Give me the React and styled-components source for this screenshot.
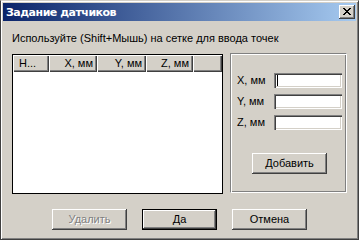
import React from "react";
import styled, { createGlobalStyle } from "styled-components";

const GlobalStyle = createGlobalStyle`
  html, body { margin: 0; padding: 0; background: #D4D0C8; }
  * { box-sizing: border-box; }
`;

const Window = styled.div`
  width: 359px;
  height: 240px;
  background: #D4D0C8;
  border-style: solid;
  border-width: 1px;
  border-color: #D4D0C8 #404040 #404040 #404040;
  box-shadow: inset 1px 1px 0 #fff, inset -1px -1px 0 #808080;
  padding: 2px;
  display: flex;
  flex-direction: column;
  font-family: "Liberation Sans", Arial, sans-serif;
  font-size: 11px;
  color: #000;
`;

const TitleBar = styled.div`
  height: 18px;
  display: flex;
  align-items: center;
  justify-content: space-between;
  padding: 0 0 0 3px;
  background: linear-gradient(to right, #0A246A, #A6CAF0);
`;

const TitleText = styled.span`
  color: #fff;
  font-family: "DejaVu Sans", Verdana, sans-serif;
  font-weight: bold;
  font-size: 11px;
  line-height: 13px;
  letter-spacing: -0.5px;
`;

const CloseButton = styled.div`
  width: 16px;
  height: 14px;
  background: #D4D0C8;
  box-shadow: inset -1px -1px 0 #404040, inset 1px 1px 0 #fff,
    inset -2px -2px 0 #808080, inset 2px 2px 0 #D4D0C8;
  display: flex;
  align-items: center;
  justify-content: center;
  padding-bottom: 1px;
  margin-right: 1px;
`;

const Body = styled.div`
  padding: 0 9px;
  display: flex;
  flex-direction: column;
`;

const Hint = styled.div`
  margin-top: 11px;
  line-height: 13px;
  white-space: nowrap;
`;

const MainRow = styled.div`
  margin-top: 8px;
  display: flex;
  align-items: flex-start;
  gap: 7px;
`;

const ListView = styled.div`
  margin-top: 1px;
  width: 211px;
  height: 140px;
  border: 1px solid #000;
  background: #fff;
  display: flex;
  flex-direction: column;
`;

const Header = styled.div`
  display: flex;
  height: 17px;
  background: #D4D0C8;
`;

const HeaderCell = styled.div`
  width: ${(p) => (p.$w ? `${p.$w}px` : "auto")};
  flex: ${(p) => (p.$w ? "0 0 auto" : "1 1 auto")};
  height: 17px;
  line-height: 16px;
  padding: 0 ${(p) => (p.$right ? "4px" : "6px")};
  text-align: ${(p) => (p.$right ? "right" : "left")};
  white-space: nowrap;
  overflow: hidden;
  box-shadow: inset 1px 1px 0 #fff, inset -1px -1px 0 #404040,
    inset -2px -2px 0 #808080;
`;

const GroupBox = styled.div`
  width: 117px;
  height: 140px;
  border-style: solid;
  border-width: 1px;
  border-color: #808080 #fff #fff #808080;
  box-shadow: inset 1px 1px 0 #fff, inset -1px -1px 0 #808080;
  padding: 19px 4px 0 6px;
  display: flex;
  flex-direction: column;
`;

const Fields = styled.div`
  display: grid;
  grid-template-columns: 37px 68px;
  row-gap: 6px;
  align-items: center;
`;

const FieldLabel = styled.span`
  line-height: 15px;
  white-space: nowrap;
`;

const TextBox = styled.div`
  height: 15px;
  background: #fff;
  box-shadow: inset 1px 1px 0 #808080, inset 2px 2px 0 #404040,
    inset -1px -1px 0 #fff, inset -2px -2px 0 #D4D0C8;
  display: flex;
  align-items: center;
  padding-left: 3px;
`;

const Caret = styled.span`
  width: 1px;
  height: 11px;
  background: #000;
`;

const Button = styled.div`
  width: 75px;
  height: 21px;
  display: flex;
  align-items: center;
  justify-content: center;
  background: #D4D0C8;
  color: ${(p) => (p.$disabled ? "#808080" : "#000")};
  text-shadow: ${(p) => (p.$disabled ? "1px 1px 0 #fff" : "none")};
  border: ${(p) => (p.$default ? "1px solid #000" : "none")};
  box-shadow: inset -1px -1px 0 #404040, inset 1px 1px 0 #fff,
    inset -2px -2px 0 #808080, inset 2px 2px 0 #D4D0C8;
  line-height: 13px;
  white-space: nowrap;
`;

const AddButton = styled(Button)`
  margin-top: 23px;
  align-self: center;
`;

const ButtonRow = styled.div`
  margin-top: 15px;
  display: flex;
  justify-content: center;
  gap: 15px;
`;

export default function App() {
  return (
    <>
      <GlobalStyle />
      <Window>
        <TitleBar>
          <TitleText>Задание датчиков</TitleText>
          <CloseButton>
            <svg width="8" height="7" viewBox="0 0 8 7">
              <path
                d="M0 0h2v1h1v1h2v-1h1v-1h2v1h-1v1h-1v1h-1v1h1v1h1v1h1v1h-2v-1h-1v-1h-2v1h-1v1h-2v-1h1v-1h1v-1h1v-1h-1v-1h-1v-1h-1z"
                fill="#000"
              />
            </svg>
          </CloseButton>
        </TitleBar>
        <Body>
          <Hint>Используйте (Shift+Мышь) на сетке для ввода точек</Hint>
          <MainRow>
            <ListView>
              <Header>
                <HeaderCell $w={36}>Н...</HeaderCell>
                <HeaderCell $w={48} $right>X, мм</HeaderCell>
                <HeaderCell $w={49} $right>Y, мм</HeaderCell>
                <HeaderCell $w={47} $right>Z, мм</HeaderCell>
                <HeaderCell />
              </Header>
            </ListView>
            <GroupBox>
              <Fields>
                <FieldLabel>X, мм</FieldLabel>
                <TextBox>
                  <Caret />
                </TextBox>
                <FieldLabel>Y, мм</FieldLabel>
                <TextBox />
                <FieldLabel>Z, мм</FieldLabel>
                <TextBox />
              </Fields>
              <AddButton>Добавить</AddButton>
            </GroupBox>
          </MainRow>
          <ButtonRow>
            <Button $disabled>Удалить</Button>
            <Button $default>Да</Button>
            <Button>Отмена</Button>
          </ButtonRow>
        </Body>
      </Window>
    </>
  );
}
